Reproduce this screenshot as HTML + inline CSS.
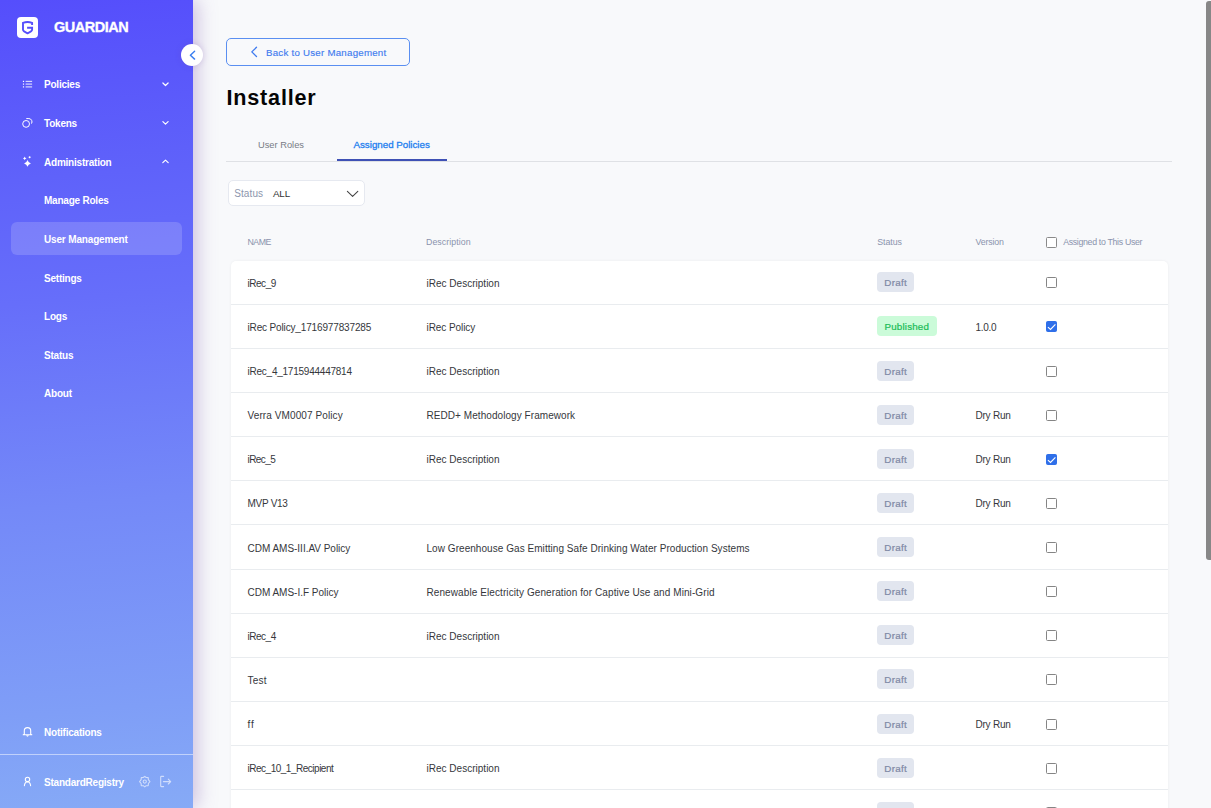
<!DOCTYPE html>
<html><head><meta charset="utf-8">
<style>
*{box-sizing:border-box;margin:0;padding:0}
html,body{width:1211px;height:808px;overflow:hidden;background:#f8f9fb;font-family:"Liberation Sans",sans-serif}
#sb{position:absolute;left:0;top:0;width:193px;height:808px;background:linear-gradient(175deg,#554efc 0%,#5f62fa 22%,#666efa 37%,#7489f8 62%,#7f9ef7 87%,#86aaf6 100%);z-index:2;box-shadow:4px 0 18px rgba(120,80,170,0.35)}
.logo{position:absolute;left:17px;top:17px;width:21px;height:21px;background:#fff;border-radius:4px}
.brand{position:absolute;left:54px;top:19px;color:#fff;font-weight:bold;font-size:14.5px;letter-spacing:-0.5px;-webkit-text-stroke:0.3px #fff}
.nav{position:absolute;left:44px;color:#fff;font-weight:bold;font-size:10px;letter-spacing:-0.22px;line-height:12px}
.ico{position:absolute}
.sel{position:absolute;left:11px;top:222px;width:171px;height:33px;border-radius:6px;background:rgba(255,255,255,0.16)}
.toggle{position:absolute;left:181px;top:44px;width:22px;height:22px;border-radius:50%;background:#fff;z-index:3;box-shadow:0 0 6px rgba(110,70,170,0.22)}
#main{position:absolute;left:193px;top:0;width:1018px;height:808px}
.back{position:absolute;left:33px;top:38.4px;width:184px;height:27.4px;border:1px solid #5a8ff1;border-radius:5px}
.backt{position:absolute;left:39px;top:7.4px;color:#3f7bef;font-size:9.7px;letter-spacing:0.25px;-webkit-text-stroke:0.15px currentColor;line-height:12px;white-space:nowrap}
.title{position:absolute;left:33.5px;top:84.5px;font-size:21.6px;line-height:26px;font-weight:bold;color:#050505;letter-spacing:0.8px}
.tab{position:absolute;font-size:9.3px;top:139px;line-height:12px;white-space:nowrap}
.tab.act{color:#1f7fef;font-size:9.8px;letter-spacing:-0.03px;-webkit-text-stroke:0.3px currentColor;top:138.5px}
.divider{position:absolute;left:33px;top:161px;width:946px;height:1px;background:#dfe1e5}
.uline{position:absolute;left:144px;top:159px;width:110px;height:2px;background:#3f51b5}
.select{position:absolute;left:34.7px;top:180.3px;width:137.6px;height:25.4px;background:#fff;border:1px solid #e6e9f0;border-radius:5px}
.sl{position:absolute;left:5.5px;top:7px;font-size:10px;line-height:12px;color:#8d96ad;letter-spacing:0.1px}
.sv{position:absolute;left:44.3px;top:6.8px;font-size:9.8px;letter-spacing:-0.15px;line-height:12px;color:#333}
.th{position:absolute;top:237px;font-size:8.8px;line-height:11px;color:#8a93ad;white-space:nowrap}
.cbh{position:absolute;left:853.2px;top:237.2px;width:10.7px;height:10.5px;border:1px solid #8a8a8a;border-radius:1.5px;background:#fff}
.card{position:absolute;left:38px;top:261px;width:936.6px;height:560px;background:#fff;border-radius:5px;box-shadow:0 0 3px rgba(0,0,0,0.06)}
.sep{position:absolute;left:0;width:936.6px;height:1px;background:#e9ecef}
.c{position:absolute;font-size:10px;color:#35373c;line-height:12px;white-space:nowrap}
.badge{position:absolute;left:646px;height:19.7px;border-radius:4px;font-size:9.8px;line-height:21.5px;text-align:center;-webkit-text-stroke:0.22px currentColor}
.draft{background:#e2e6ef;color:#7f89a5;width:37.3px;letter-spacing:0.29px}
.pub{background:#cbfbd9;color:#1cbc58;width:59.6px;letter-spacing:0.17px}
.cb{position:absolute;left:815.2px;width:10.8px;height:10.7px;border:1px solid #858585;border-radius:1.5px;background:#fff}
.cb.on{background:#2f6fe9;border-color:#2f6fe9}
#scroll{position:absolute;left:1205.8px;top:1px;width:8px;height:559px;background:#878787;border-radius:3px}
</style></head><body>
<div id="sb">
  <div class="logo"><svg width="21" height="21" viewBox="0 0 21 21" style="position:absolute;left:0;top:0"><path d="M15.1 8 L15.1 5.9 Q10.55 4.1 6 5.9 L6 12.8 C6 14.2 8.5 15.4 10.55 16.3 C12.6 15.4 15.1 14.2 15.1 12.8 L15.1 10.75 L10.1 10.75" stroke="#554efc" stroke-width="1.9" fill="none" stroke-linejoin="miter"/></svg></div>
  <div class="brand">GUARDIAN</div>
  <svg class="ico" style="left:18px;top:74px" width="20" height="20" viewBox="18 74 20 20"><g fill="#fff"><rect x="22.9" y="80.8" width="1.2" height="1.2"/><rect x="22.9" y="83.5" width="1.2" height="1.2"/><rect x="22.9" y="86.3" width="1.2" height="1.2"/></g><g fill="rgba(255,255,255,0.75)"><rect x="25.6" y="80.8" width="6.5" height="1.2"/><rect x="25.6" y="83.5" width="6.5" height="1.2"/><rect x="25.6" y="86.3" width="6.5" height="1.2"/></g></svg>
  <svg class="ico" style="left:18px;top:113px" width="20" height="20" viewBox="18 113 20 20"><g stroke="#fff" stroke-width="1" fill="none"><circle cx="26.1" cy="123.9" r="3.4"/><path d="M26.3 118.55 L28.85 118.55 A3.25 3.25 0 0 1 31.45 123.6"/></g></svg>
  <svg class="ico" style="left:18px;top:151px" width="20" height="20" viewBox="18 151 20 20"><g fill="#fff"><path d="M27.5 160 Q28.2 162.7 30.9 163.4 Q28.2 164.1 27.5 166.8 Q26.8 164.1 24.1 163.4 Q26.8 162.7 27.5 160Z"/><path d="M24.7 156.6 Q25 158.1 26.5 158.4 Q25 158.7 24.7 160.2 Q24.4 158.7 22.9 158.4 Q24.4 158.1 24.7 156.6Z"/><circle cx="29.6" cy="157.2" r="1"/></g></svg>
  <svg class="ico" style="left:155px;top:74px" width="20" height="20" viewBox="155 74 20 20"><path d="M162.9 83 L165.5 85.5 L168.1 83" stroke="#fff" stroke-width="1.2" fill="none" stroke-linecap="round" stroke-linejoin="round"/></svg>
  <svg class="ico" style="left:155px;top:113px" width="20" height="20" viewBox="155 113 20 20"><path d="M162.9 121.6 L165.5 124.1 L168.1 121.6" stroke="#fff" stroke-width="1.2" fill="none" stroke-linecap="round" stroke-linejoin="round"/></svg>
  <svg class="ico" style="left:155px;top:151px" width="20" height="20" viewBox="155 151 20 20"><path d="M162.8 162.6 L165.5 160.1 L168.2 162.6" stroke="#fff" stroke-width="1.2" fill="none" stroke-linecap="round" stroke-linejoin="round"/></svg>
  <div class="nav" style="top:79px">Policies</div>
  <div class="nav" style="top:118px">Tokens</div>
  <div class="nav" style="top:157px">Administration</div>
  <div class="nav" style="top:195px">Manage Roles</div>
  <div class="sel"></div>
  <div class="nav" style="top:234px;letter-spacing:-0.16px">User Management</div>
  <div class="nav" style="top:272.5px">Settings</div>
  <div class="nav" style="top:311px">Logs</div>
  <div class="nav" style="top:349.7px">Status</div>
  <div class="nav" style="top:388.4px">About</div>
  <svg class="ico" style="left:18px;top:722px" width="20" height="20" viewBox="18 722 20 20"><g stroke="#fff" stroke-width="1.1" fill="none" stroke-linejoin="round"><path d="M24.3 734.2 L24.3 730.7 Q24.3 727.6 27.5 727.6 Q30.7 727.6 30.7 730.7 L30.7 734.2 Q31.2 734.6 31.8 734.8 L23.2 734.8 Q23.8 734.6 24.3 734.2Z"/><path d="M26.6 735.3 Q27.5 736.9 28.4 735.3"/></g></svg>
  <div class="nav" style="top:727.3px">Notifications</div>
  <div style="position:absolute;left:0;top:754px;width:193px;height:1px;background:rgba(255,255,255,0.5)"></div>
  <svg class="ico" style="left:18px;top:771px" width="20" height="20" viewBox="18 771 20 20"><g stroke="#fff" stroke-width="1.1" fill="none" stroke-linecap="round"><circle cx="27.5" cy="779.4" r="2.2"/><path d="M24.4 785.7 Q24.8 781.8 27.5 781.7 Q30.2 781.8 30.6 785.7"/></g></svg>
  <div class="nav" style="top:777.3px">StandardRegistry</div>
  <svg class="ico" style="left:134px;top:771px" width="42" height="21" viewBox="134 771 42 21"><g stroke="rgba(255,255,255,0.62)" stroke-width="1.1" fill="none" stroke-linecap="round" stroke-linejoin="round"><path d="M144.75 776.3 L146.2 777.5 L148.2 777.6 L148.4 779.7 L149.9 781.6 L148.4 783.5 L148.2 785.6 L146.2 785.7 L144.75 786.9 L143.3 785.7 L141.3 785.6 L141.1 783.5 L139.6 781.6 L141.1 779.7 L141.3 777.6 L143.3 777.5 Z"/><circle cx="144.75" cy="781.6" r="1.6"/><path d="M163.6 776.4 L161.4 776.4 Q160.7 776.4 160.7 777.1 L160.7 786 Q160.7 786.6 161.4 786.6 L163.6 786.6"/><path d="M163.4 781.6 L170.6 781.6 M168.3 779.2 L170.7 781.6 L168.3 784"/></g></svg>
</div>
<div class="toggle"><svg width="22" height="22" viewBox="181 44 22 22" style="position:absolute;left:0;top:0"><path d="M194.6 51.3 L190.4 55.2 L194.6 59.1" stroke="#3b7ff0" stroke-width="1.45" fill="none" stroke-linecap="round" stroke-linejoin="round"/></svg></div>
<div id="main">
  <div class="back"><svg width="184" height="27" viewBox="226 39 184 27" style="position:absolute;left:-1px;top:-1px"><path d="M256.5 48.3 L251.8 52.9 L256.5 57.5" stroke="#3f7bef" stroke-width="1.3" fill="none" stroke-linecap="round" stroke-linejoin="round"/></svg><span class="backt">Back to User Management</span></div>
  <div class="title">Installer</div>
  <div class="tab" style="left:65px;color:#777b85">User Roles</div>
  <div class="tab act" style="left:160.5px">Assigned Policies</div>
  <div class="divider"></div>
  <div class="uline"></div>
  <div class="select"><span class="sl">Status</span><span class="sv">ALL</span><svg width="14" height="8" viewBox="0 0 14 8" style="position:absolute;left:117px;top:9px"><path d="M1.4 1.3 L6.6 6.3 L11.8 1.3" stroke="#444" stroke-width="1.1" fill="none" stroke-linecap="round" stroke-linejoin="round"/></svg></div>
  <div class="th" style="left:54.5px;letter-spacing:-0.5px">NAME</div>
  <div class="th" style="left:233px;letter-spacing:0.06px">Description</div>
  <div class="th" style="left:684.3px;letter-spacing:-0.05px">Status</div>
  <div class="th" style="left:782.6px;letter-spacing:-0.16px">Version</div>
  <div class="cbh"></div>
  <div class="th" style="left:870.2px;letter-spacing:-0.33px">Assigned to This User</div>
  <div class="card" id="card"><div class="c" style="left:16.5px;top:17.00px;letter-spacing:-0.466px">iRec_9</div><div class="c" style="left:195.5px;top:17.00px;letter-spacing:0.013px">iRec Description</div><div class="badge draft" style="top:11px">Draft</div><div class="cb" style="top:16px"></div><div class="sep" style="top:43px"></div>
<div class="c" style="left:16.5px;top:61.09px;letter-spacing:-0.147px">iRec Policy_1716977837285</div><div class="c" style="left:195.5px;top:61.09px;letter-spacing:-0.076px">iRec Policy</div><div class="badge pub" style="top:55px">Published</div><div class="c" style="left:744.5px;top:61.09px;letter-spacing:-0.310px">1.0.0</div><div class="cb on" style="top:60px"><svg width="9" height="9" viewBox="0 0 9 9" style="position:absolute;left:0;top:0;overflow:visible"><path d="M0.9 5.1 L3.5 7.4 L8.4 2.3" stroke="#fff" stroke-width="1.15" fill="none"/></svg></div><div class="sep" style="top:87px"></div>
<div class="c" style="left:16.5px;top:105.18px;letter-spacing:-0.236px">iRec_4_1715944447814</div><div class="c" style="left:195.5px;top:105.18px;letter-spacing:0.013px">iRec Description</div><div class="badge draft" style="top:100px">Draft</div><div class="cb" style="top:105px"></div><div class="sep" style="top:131px"></div>
<div class="c" style="left:16.5px;top:149.27px;letter-spacing:0.101px">Verra VM0007 Policy</div><div class="c" style="left:195.5px;top:149.27px;letter-spacing:0.061px">REDD+ Methodology Framework</div><div class="badge draft" style="top:144px">Draft</div><div class="c" style="left:744.5px;top:149.27px;letter-spacing:-0.230px">Dry Run</div><div class="cb" style="top:149px"></div><div class="sep" style="top:175px"></div>
<div class="c" style="left:16.5px;top:193.36px;letter-spacing:-0.586px">iRec_5</div><div class="c" style="left:195.5px;top:193.36px;letter-spacing:0.013px">iRec Description</div><div class="badge draft" style="top:188px">Draft</div><div class="c" style="left:744.5px;top:193.36px;letter-spacing:-0.230px">Dry Run</div><div class="cb on" style="top:193px"><svg width="9" height="9" viewBox="0 0 9 9" style="position:absolute;left:0;top:0;overflow:visible"><path d="M0.9 5.1 L3.5 7.4 L8.4 2.3" stroke="#fff" stroke-width="1.15" fill="none"/></svg></div><div class="sep" style="top:219px"></div>
<div class="c" style="left:16.5px;top:237.45px;letter-spacing:-0.277px">MVP V13</div><div class="badge draft" style="top:232px">Draft</div><div class="c" style="left:744.5px;top:237.45px;letter-spacing:-0.230px">Dry Run</div><div class="cb" style="top:237px"></div><div class="sep" style="top:263px"></div>
<div class="c" style="left:16.5px;top:281.54px;letter-spacing:-0.018px">CDM AMS-III.AV Policy</div><div class="c" style="left:195.5px;top:281.54px;letter-spacing:0.050px">Low Greenhouse Gas Emitting Safe Drinking Water Production Systems</div><div class="badge draft" style="top:276px">Draft</div><div class="cb" style="top:281px"></div><div class="sep" style="top:308px"></div>
<div class="c" style="left:16.5px;top:325.63px;letter-spacing:-0.013px">CDM AMS-I.F Policy</div><div class="c" style="left:195.5px;top:325.63px;letter-spacing:0.093px">Renewable Electricity Generation for Captive Use and Mini-Grid</div><div class="badge draft" style="top:320px">Draft</div><div class="cb" style="top:325px"></div><div class="sep" style="top:352px"></div>
<div class="c" style="left:16.5px;top:369.72px;letter-spacing:-0.486px">iRec_4</div><div class="c" style="left:195.5px;top:369.72px;letter-spacing:0.013px">iRec Description</div><div class="badge draft" style="top:364px">Draft</div><div class="cb" style="top:369px"></div><div class="sep" style="top:396px"></div>
<div class="c" style="left:16.5px;top:413.81px;letter-spacing:0.220px">Test</div><div class="badge draft" style="top:408px">Draft</div><div class="cb" style="top:413px"></div><div class="sep" style="top:440px"></div>
<div class="c" style="left:16.5px;top:457.90px;letter-spacing:1.000px">ff</div><div class="badge draft" style="top:453px">Draft</div><div class="c" style="left:744.5px;top:457.90px;letter-spacing:-0.230px">Dry Run</div><div class="cb" style="top:458px"></div><div class="sep" style="top:484px"></div>
<div class="c" style="left:16.5px;top:501.99px;letter-spacing:-0.487px">iRec_10_1_Recipient</div><div class="c" style="left:195.5px;top:501.99px;letter-spacing:0.013px">iRec Description</div><div class="badge draft" style="top:497px">Draft</div><div class="cb" style="top:502px"></div><div class="sep" style="top:528px"></div>
<div class="badge draft" style="top:541px">Draft</div><div class="cb" style="top:546px"></div><div class="sep" style="top:572px"></div></div>
</div>
<div id="scroll"></div>
</body></html>
